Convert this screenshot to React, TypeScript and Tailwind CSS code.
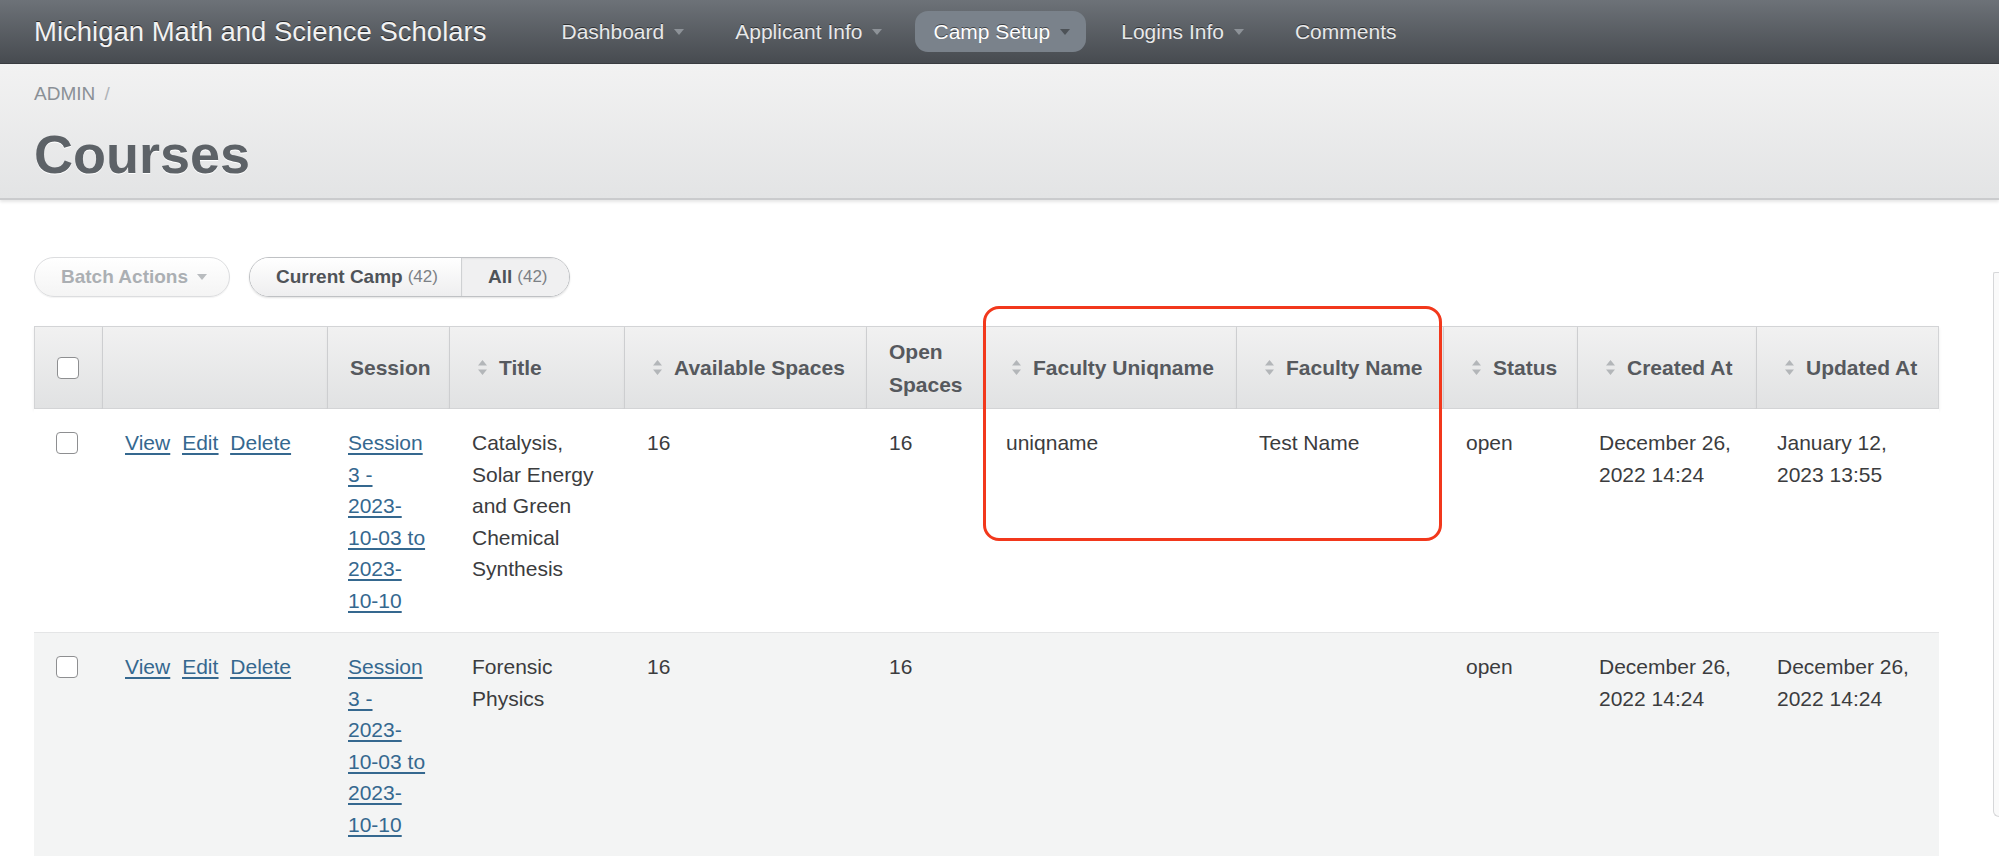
import React from 'react';

const NAV = [
  { label: 'Dashboard', caret: true },
  { label: 'Applicant Info', caret: true },
  { label: 'Camp Setup', caret: true, active: true },
  { label: 'Logins Info', caret: true },
  { label: 'Comments', caret: false },
];

const ROWS = [
  {
    title: 'Catalysis, Solar Energy and Green Chemical Synthesis',
    available: '16',
    open: '16',
    uniqname: 'uniqname',
    name: 'Test Name',
    status: 'open',
    created: 'December 26, 2022 14:24',
    updated: 'January 12, 2023 13:55',
  },
  {
    title: 'Forensic Physics',
    available: '16',
    open: '16',
    uniqname: '',
    name: '',
    status: 'open',
    created: 'December 26, 2022 14:24',
    updated: 'December 26, 2022 14:24',
  },
];

const SESSION_LINES = ['Session', '3 -', '2023-', '10-03 to', '2023-', '10-10'];

const Caret = ({ className = '' }: { className?: string }) => (
  <svg width="10" height="6" viewBox="0 0 10 6" className={className}>
    <path d="M0 0h10L5 6z" fill="currentColor" />
  </svg>
);

const SortIcon = () => (
  <svg width="9" height="15" viewBox="0 0 9 15" className="shrink-0 text-[#b3b6b9]">
    <path d="M4.5 0L9 5.5H0z M0 9.5h9L4.5 15z" fill="currentColor" />
  </svg>
);

const Checkbox = () => (
  <div className="w-[22px] h-[22px] rounded-[4px] border-[1.5px] border-[#8e8f91] bg-white" />
);

const thBase =
  'h-[83px] px-[22px] text-left align-middle font-bold text-[#56595e] leading-[33px] bg-gradient-to-b from-[#f1f1f1] to-[#e1e2e3] border-t border-b border-r border-[#d3d4d6] shadow-[0_2px_3px_rgba(0,0,0,0.08)]';

const Sortable = ({ label }: { label: string }) => (
  <div className="flex items-center whitespace-nowrap">
    <span className="ml-[6px] mr-[12px] flex">
      <SortIcon />
    </span>
    {label}
  </div>
);

const App: React.FC = () => {
  return (
    <div className="relative w-[1999px] h-[856px] overflow-hidden bg-white font-['Liberation_Sans',Arial,sans-serif]">
      {/* top bar */}
      <nav className="h-[64px] flex items-center px-[34px] bg-gradient-to-b from-[#6d7278] to-[#474b50] border-b border-[#3a3d41]">
        <div className="text-[27.5px] text-[#f2f2f2] [text-shadow:0_-1px_0_rgba(0,0,0,0.6)] whitespace-nowrap">
          Michigan Math and Science Scholars
        </div>
        <div className="flex items-center gap-[17px] ml-[57px]">
          {NAV.map((item) => (
            <div
              key={item.label}
              className={`flex items-center h-[41px] pl-[18px] pr-[16px] rounded-[13px] text-[21px] whitespace-nowrap [text-shadow:0_-1px_0_rgba(0,0,0,0.5)] ${
                item.active ? 'bg-[#7a828b] text-white' : 'text-[#e8e9ea]'
              }`}
            >
              {item.label}
              {item.caret && (
                <Caret className={`ml-[10px] ${item.active ? 'text-[#4d5257]' : 'text-[#8d9298]'}`} />
              )}
            </div>
          ))}
        </div>
      </nav>

      {/* page header */}
      <header className="h-[136px] px-[34px] pt-[18px] bg-gradient-to-b from-[#f2f2f2] to-[#e3e4e5] border-b-2 border-[#cacbcd] shadow-[0_2px_3px_rgba(0,0,0,0.1)]">
        <div className="text-[19px] leading-[24px] text-[#8a9096]">
          ADMIN <span className="ml-[4px] text-[#b0b4b8]">/</span>
        </div>
        <h1 className="mt-[18px] text-[54px] leading-[60px] font-bold text-[#5d6267] [text-shadow:0_1px_0_#ffffff]">
          Courses
        </h1>
      </header>

      <main className="pl-[34px] pr-[60px] pt-[57px]">
        {/* toolbar */}
        <div className="flex items-center gap-[19px]">
          <div className="flex items-center h-[40px] w-[196px] pl-[26px] rounded-full border border-[#dcdddf] bg-gradient-to-b from-white to-[#f4f4f4] shadow-[0_1px_1px_rgba(0,0,0,0.05)] text-[19px] font-bold text-[#abafb3]">
            Batch Actions
            <Caret className="ml-[9px] text-[#b9bcbf]" />
          </div>
          <div className="flex h-[40px] rounded-full border border-[#bfc1c4] overflow-hidden shadow-[0_1px_2px_rgba(0,0,0,0.12)]">
            <div className="flex items-center w-[211px] pl-[26px] bg-gradient-to-b from-white to-[#eeeeef] text-[19px] font-bold text-[#4f5358]">
              Current Camp
              <span className="ml-[5px] text-[17px] font-normal text-[#7c8085]">(42)</span>
            </div>
            <div className="flex items-center w-[108px] pl-[26px] border-l border-[#cfd1d3] bg-[#f0f0f1] shadow-[inset_0_1px_2px_rgba(0,0,0,0.06)] text-[19px] font-bold text-[#4f5358]">
              All
              <span className="ml-[5px] text-[17px] font-normal text-[#7c8085]">(42)</span>
            </div>
          </div>
        </div>

        {/* table */}
        <table className="mt-[29px] w-[1905px] table-fixed border-separate border-spacing-0 text-[21px] text-[#3b3c3e]">
          <colgroup>
            <col className="w-[69px]" />
            <col className="w-[225px]" />
            <col className="w-[122px]" />
            <col className="w-[175px]" />
            <col className="w-[242px]" />
            <col className="w-[117px]" />
            <col className="w-[253px]" />
            <col className="w-[207px]" />
            <col className="w-[134px]" />
            <col className="w-[179px]" />
            <col className="w-[182px]" />
          </colgroup>
          <thead>
            <tr>
              <th className={`${thBase} border-l`}>
                <Checkbox />
              </th>
              <th className={thBase} />
              <th className={thBase}>Session</th>
              <th className={thBase}>
                <Sortable label="Title" />
              </th>
              <th className={thBase}>
                <Sortable label="Available Spaces" />
              </th>
              <th className={thBase}>Open Spaces</th>
              <th className={thBase}>
                <Sortable label="Faculty Uniqname" />
              </th>
              <th className={thBase}>
                <Sortable label="Faculty Name" />
              </th>
              <th className={thBase}>
                <Sortable label="Status" />
              </th>
              <th className={thBase}>
                <Sortable label="Created At" />
              </th>
              <th className={thBase}>
                <Sortable label="Updated At" />
              </th>
            </tr>
          </thead>
          <tbody>
            {ROWS.map((row, i) => {
              const td = `align-top px-[22px] pt-[18px] pb-[16px] leading-[31.5px] ${
                i % 2 === 1 ? 'bg-[#f3f4f4] border-t border-[#e4e5e6]' : 'bg-white'
              }`;
              return (
                <tr key={i}>
                  <td className={td}>
                    <div className="h-[31.5px] flex items-center">
                      <Checkbox />
                    </div>
                  </td>
                  <td className={td}>
                    <div className="flex gap-[12px] text-[#35688f] underline underline-offset-[3px]">
                      <a href="#">View</a>
                      <a href="#">Edit</a>
                      <a href="#">Delete</a>
                    </div>
                  </td>
                  <td className={`${td} pl-[20px]`}>
                    <a href="#" className="text-[#35688f] underline underline-offset-[3px]">
                      {SESSION_LINES.map((l, k) => (
                        <React.Fragment key={k}>
                          {l}
                          {k < SESSION_LINES.length - 1 && <br />}
                        </React.Fragment>
                      ))}
                    </a>
                  </td>
                  <td className={td}>{row.title}</td>
                  <td className={td}>{row.available}</td>
                  <td className={td}>{row.open}</td>
                  <td className={td}>{row.uniqname}</td>
                  <td className={td}>{row.name}</td>
                  <td className={td}>{row.status}</td>
                  <td className={`${td} pl-[21px]`}>{row.created}</td>
                  <td className={`${td} pl-[20px]`}>{row.updated}</td>
                </tr>
              );
            })}
          </tbody>
        </table>
      </main>

      {/* side scroll edge */}
      <div className="absolute right-0 top-[272px] w-[6px] h-[545px] border-l border-b border-t border-[#d6d7d9] rounded-bl-[6px] rounded-tl-[2px] bg-[#fafafa]" />

      {/* annotation highlight */}
      <div className="absolute left-[983px] top-[306px] w-[459px] h-[235px] border-[3px] border-[#f2381c] rounded-[16px] pointer-events-none" />
    </div>
  );
};

export default App;
